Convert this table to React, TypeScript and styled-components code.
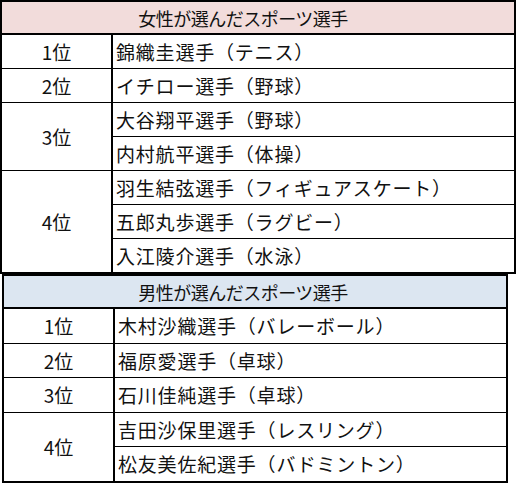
import React from "react";
import styled, { createGlobalStyle } from "styled-components";

const GlobalStyle = createGlobalStyle`
  body {
    margin: 0;
    background: #ffffff;
    font-family: "Noto Sans CJK JP", "Noto Sans", sans-serif;
    color: #111111;
  }
`;

const Page = styled.div`
  display: flex;
  flex-direction: column;
  align-items: flex-start;
  width: 522px;
`;

const Table = styled.table<{ width: number; offset: number }>`
  border-collapse: collapse;
  width: ${({ width }) => width}px;
  margin-left: ${({ offset }) => offset}px;
  border: 2px solid #000;
  table-layout: fixed;
`;

// header text sits a little left of the table centre, as in the sheet
const HeadCell = styled.th<{ tint: string; shift: number }>`
  background: ${({ tint }) => tint};
  height: 31px;
  padding: 0 ${({ shift }) => shift}px 0 0;
  border-bottom: 2px solid #000;
  font-weight: 400;
  font-size: 18px;
  text-align: center;
  letter-spacing: -0.5px;
`;

const RankCell = styled.td`
  width: 110px;
  padding: 0;
  border: 1px solid #000;
  border-right: 2px solid #000;
  text-align: center;
  font-size: 19px;
`;

const NameCell = styled.td<{ rowHeight: number }>`
  height: ${({ rowHeight }) => rowHeight}px;
  padding: 0 0 0 3px;
  border: 1px solid #000;
  font-size: 19px;
  letter-spacing: 0.8px;
  white-space: nowrap;
`;

type Group = { rank: string; names: string[] };

const women: Group[] = [
  { rank: "1位", names: ["錦織圭選手（テニス）"] },
  { rank: "2位", names: ["イチロー選手（野球）"] },
  { rank: "3位", names: ["大谷翔平選手（野球）", "内村航平選手（体操）"] },
  {
    rank: "4位",
    names: [
      "羽生結弦選手（フィギュアスケート）",
      "五郎丸歩選手（ラグビー）",
      "入江陵介選手（水泳）",
    ],
  },
];

const men: Group[] = [
  { rank: "1位", names: ["木村沙織選手（バレーボール）"] },
  { rank: "2位", names: ["福原愛選手（卓球）"] },
  { rank: "3位", names: ["石川佳純選手（卓球）"] },
  {
    rank: "4位",
    names: ["吉田沙保里選手（レスリング）", "松友美佐紀選手（バドミントン）"],
  },
];

function RankTable(props: {
  title: string;
  tint: string;
  groups: Group[];
  width: number;
  offset: number;
  rowHeight: number;
  shift: number;
}) {
  return (
    <Table width={props.width} offset={props.offset}>
      <colgroup>
        <col style={{ width: 111 }} />
        <col />
      </colgroup>
      <thead>
        <tr>
          <HeadCell colSpan={2} tint={props.tint} shift={props.shift}>
            {props.title}
          </HeadCell>
        </tr>
      </thead>
      <tbody>
        {props.groups.map((g) =>
          g.names.map((name, i) => (
            <tr key={name}>
              {i === 0 ? (
                <RankCell rowSpan={g.names.length}>{g.rank}</RankCell>
              ) : null}
              <NameCell rowHeight={props.rowHeight}>{name}</NameCell>
            </tr>
          )),
        )}
      </tbody>
    </Table>
  );
}

export default function App() {
  return (
    <>
      <GlobalStyle />
      <Page>
        <RankTable
          title="女性が選んだスポーツ選手"
          tint="#f2dcdb"
          groups={women}
          width={516}
          offset={0}
          rowHeight={33}
          shift={30}
        />
        <RankTable
          title="男性が選んだスポーツ選手"
          tint="#dce6f1"
          groups={men}
          width={506}
          offset={2}
          rowHeight={33.5}
          shift={24}
        />
      </Page>
    </>
  );
}
